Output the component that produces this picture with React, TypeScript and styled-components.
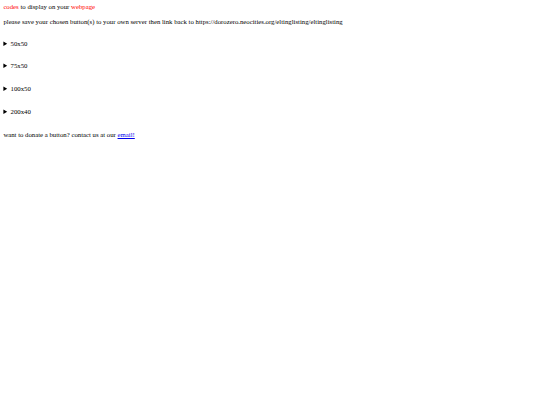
import React from "react";
import styled, { createGlobalStyle } from "styled-components";

const Global = createGlobalStyle`
  html { background: #fff; }
  body { margin: 3.375px; font-family: "Liberation Serif", "Times New Roman", serif; font-size: 6.75px; color: #000; }
`;

const Header = styled.div`
  line-height: 7.6px;
`;

const Red = styled.span`
  color: red;
`;

const Para = styled.p`
  margin: 6.75px 0;
  line-height: 7.6px;
`;

const List = styled.div`
  display: flex;
  flex-direction: column;
  gap: 15.2px;
  margin: 14.35px 0 15.2px;
`;

const Item = styled.details`
  line-height: 7.6px;
`;

const Summary = styled.summary`
  cursor: pointer;
`;

const Link = styled.a`
  color: #0000ee;
  text-decoration: underline;
`;

export default function App() {
  const sizes = ["50x50", "75x50", "100x50", "200x40"];
  return (
    <>
      <Global />
      <Header>
        <Red>codes</Red> to display on your <Red>webpage</Red>
      </Header>
      <Para>
        please save your chosen button(s) to your own server then link back to
        https://dorozero.neocities.org/eltinglisting/eltinglisting
      </Para>
      <List>
        {sizes.map((s) => (
          <Item key={s}>
            <Summary>{s}</Summary>
          </Item>
        ))}
      </List>
      <Para>
        want to donate a button? contact us at our <Link href="#">email!</Link>
      </Para>
    </>
  );
}
